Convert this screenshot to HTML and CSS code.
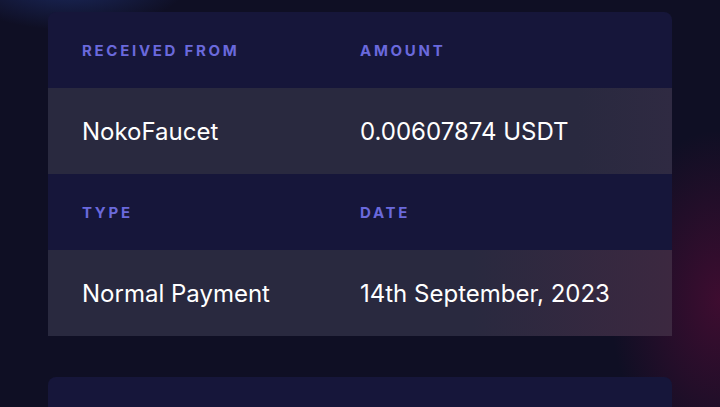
FILE: index.html
```html
<!DOCTYPE html>
<html lang="en">
<head>
  <meta charset="UTF-8" />
  <title>Transaction details</title>
  <link rel="stylesheet" href="styles.css">
</head>
<body>
  <div class="glow glow-blue"></div>
  <div class="glow glow-red"></div>
  <main class="page">
    <section class="card">
      <div class="row head">
        <div class="cell">Received From</div>
        <div class="cell">Amount</div>
      </div>
      <div class="row value">
        <div class="cell">NokoFaucet</div>
        <div class="cell">0.00607874 USDT</div>
      </div>
      <div class="row head">
        <div class="cell">Type</div>
        <div class="cell">Date</div>
      </div>
      <div class="row value warm">
        <div class="cell">Normal Payment</div>
        <div class="cell">14th September, 2023</div>
      </div>
    </section>
    <section class="card next"></section>
  </main>
</body>
</html>
```

FILE: styles.css
```css
body {
  margin: 0;
  height: 407px;
  overflow: hidden;
  font-family: Inter, 'Noto Sans', sans-serif;
  background: #0f0f24;
  color: #fff;
  position: relative;
}

.glow {
  position: absolute;
  border-radius: 50%;
  pointer-events: none;
}

.glow-blue {
  left: -50px;
  top: -70px;
  width: 240px;
  height: 100px;
  background: radial-gradient(closest-side, rgba(40, 70, 160, 0.5), rgba(40, 70, 160, 0));
}

.glow-red {
  right: -110px;
  top: 130px;
  width: 220px;
  height: 340px;
  background: radial-gradient(closest-side, rgba(70, 12, 50, 0.85), rgba(70, 12, 50, 0));
}

.page {
  position: relative;
  padding: 12px 48px 0;
  display: flex;
  flex-direction: column;
  gap: 41px;
}

.card {
  background: #16163a;
  border-radius: 8px 8px 0 0;
}

.row {
  display: grid;
  grid-template-columns: 278px 1fr;
}

.cell {
  padding-left: 34px;
}

.head {
  height: 76px;
  align-items: center;
  font-size: 15px;
  font-weight: 700;
  letter-spacing: 2.7px;
  text-transform: uppercase;
  color: #6a69dc;
}

.value {
  height: 86px;
  align-items: center;
  font-size: 24px;
  font-weight: 400;
  background: linear-gradient(90deg, #29293f 85%, #2f2a42 100%);
}

.warm {
  background: linear-gradient(90deg, #29293f 68%, #3c2840 100%);
}

.next {
  height: 60px;
}
```
